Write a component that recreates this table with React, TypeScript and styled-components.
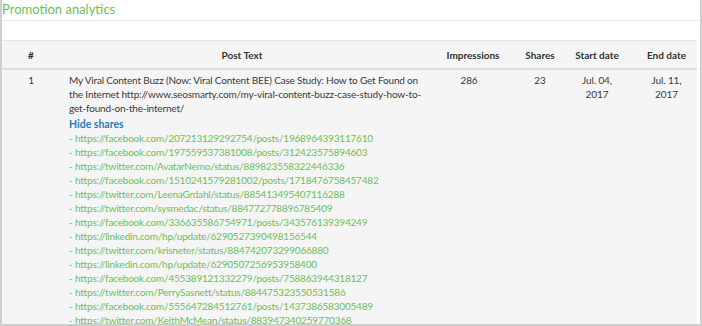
import styled, { createGlobalStyle } from "styled-components";

const GlobalStyle = createGlobalStyle`
  html, body {
    margin: 0;
    padding: 0;
    background: #ffffff;
  }
  body {
    font-family: Lato, "Open Sans", "Liberation Sans", sans-serif;
  }
`;

const Card = styled.div`
  box-sizing: border-box;
  width: 702px;
  height: 326px;
  overflow: hidden;
  border-left: 2px solid #cfcfcf;
  border-right: 2px solid #cfcfcf;
  border-bottom: 2px solid #cfcfcf;
  background: #fff;
`;

const Title = styled.div`
  height: 21px;
  box-sizing: border-box;
  border-bottom: 1px solid #ececec;
  color: #6cc05a;
  font-size: 13px;
  line-height: 18px;
`;

const Spacer = styled.div`
  height: 19px;
`;

const Table = styled.table`
  width: 695px;
  border-collapse: collapse;
  table-layout: fixed;
  font-size: 10px;
  color: #3a3a3a;
  border-top: 1px solid #e4e4e4;
`;

const HeadCell = styled.th<{ $w: number }>`
  width: ${(p) => p.$w}px;
  height: 27px;
  padding: 0;
  background: #f5f5f5;
  font-weight: 700;
  color: #333;
  text-align: center;
  border-bottom: 2px solid #dedede;
  vertical-align: middle;
`;

const Row = styled.tr`
  background: #f5f5f5;
`;

const Cell = styled.td<{ $align?: string; $padRight?: number }>`
  padding: 3px ${(p) => p.$padRight ?? 0}px 0 0;
  vertical-align: top;
  text-align: ${(p) => p.$align || "center"};
  line-height: 14px;
  white-space: pre-line;
  letter-spacing: -0.1px;
`;

const PostText = styled.div`
  padding: 0 0 0 9px;
  text-align: left;
  white-space: normal;
  letter-spacing: -0.17px;
`;

const HideLink = styled.a`
  display: block;
  color: #2a7ab5;
  font-size: 10.5px;
  font-weight: 700;
  letter-spacing: 0;
  margin-top: 2px;
  text-decoration: none;
`;

const ShareLink = styled.a`
  display: block;
  color: #6cc05a;
  letter-spacing: -0.2px;
  text-decoration: none;
`;

const shares = [
  "https://facebook.com/207213129292754/posts/1968964393117610",
  "https://facebook.com/197559537381008/posts/312423575894603",
  "https://twitter.com/AvatarNemo/status/889823558322446336",
  "https://facebook.com/1510241579281002/posts/1718476758457482",
  "https://twitter.com/LeenaGrdahl/status/885413495407116288",
  "https://twitter.com/sysmedac/status/884772778896785409",
  "https://facebook.com/336635586754971/posts/343576139394249",
  "https://linkedin.com/hp/update/6290527390498156544",
  "https://twitter.com/krisneter/status/884742073299066880",
  "https://linkedin.com/hp/update/6290507256953958400",
  "https://facebook.com/455389121332279/posts/758863944318127",
  "https://twitter.com/PerrySasnett/status/884475323550531586",
  "https://facebook.com/555647284512761/posts/1437386583005489",
  "https://twitter.com/KeithMcMean/status/883947340259770368",
  "https://twitter.com/seosmarty/status/883912044810051584",
];

const columns = [
  { label: "#", w: 58 },
  { label: "Post Text", w: 364 },
  { label: "Impressions", w: 98 },
  { label: "Shares", w: 36 },
  { label: "Start date", w: 78 },
  { label: "End date", w: 61 },
];

const App = () => {
  return (
    <>
      <GlobalStyle />
      <Card>
        <Title>Promotion analytics</Title>
        <Spacer />
        <Table>
          <thead>
            <tr>
              {columns.map((c) => (
                <HeadCell key={c.label} $w={c.w}>
                  {c.label}
                </HeadCell>
              ))}
            </tr>
          </thead>
          <tbody>
            <Row>
              <Cell>1</Cell>
              <Cell $align="left">
                <PostText>
                  My Viral Content Buzz (Now: Viral Content BEE) Case Study: How
                  to Get Found on the Internet
                  http://www.seosmarty.com/my-viral-content-buzz-case-study-how-to-get-found-on-the-internet/
                  <HideLink href="#">Hide shares</HideLink>
                  {shares.map((s) => (
                    <ShareLink key={s} href="#">
                      - {s}
                    </ShareLink>
                  ))}
                </PostText>
              </Cell>
              <Cell $padRight={8}>286</Cell>
              <Cell>23</Cell>
              <Cell>{"Jul. 04,\n2017"}</Cell>
              <Cell>{"Jul. 11,\n2017"}</Cell>
            </Row>
          </tbody>
        </Table>
      </Card>
    </>
  );
};

export default App;
